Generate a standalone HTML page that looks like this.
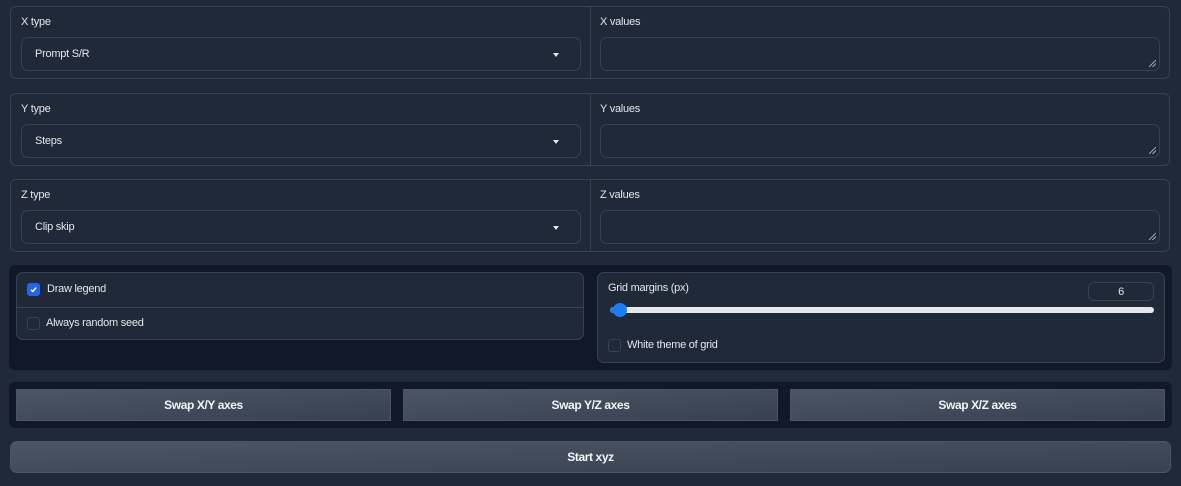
<!DOCTYPE html>
<html><head><meta charset="utf-8"><style>
*{box-sizing:border-box;margin:0;padding:0}
body{width:1181px;height:486px;background:#1f2937;font-family:"Liberation Sans",sans-serif;color:#e5e7eb;font-size:11px;letter-spacing:-0.25px;position:relative;overflow:hidden}
.abs{position:absolute}
.grp{position:absolute;left:10px;width:1160px;height:73px;border:1px solid #374151;border-radius:6px}
.grp .div{position:absolute;left:579px;top:0;bottom:0;width:1px;background:#374151}
.lbl{position:absolute;font-size:11px;color:#e5e7eb}
.sel{position:absolute;left:10px;top:30px;width:560px;height:34px;border:1px solid #374151;border-radius:7px;font-size:11px;padding:10px 0 0 13px}
.sel::after{content:"";position:absolute;right:21px;top:15px;border-left:3.5px solid transparent;border-right:3.5px solid transparent;border-top:4px solid #e5e7eb}
.ta{position:absolute;left:589px;top:30px;width:560px;height:34px;border:1px solid #374151;border-radius:7px}
.ta::after{content:"";position:absolute;right:3px;bottom:3px;width:7px;height:7px;background:linear-gradient(135deg,transparent 45%,#9ca3af 45%,#9ca3af 55%,transparent 55%,transparent 70%,#9ca3af 70%,#9ca3af 80%,transparent 80%)}
.dark{position:absolute;background:#111827;border-radius:6px}
.box{position:absolute;border:1px solid #374151;border-radius:7px;background:#1f2937}
.cb{position:absolute;width:13px;height:13px;border:1px solid #374151;border-radius:3px;background:#1f2937}
.btn{position:absolute;background:linear-gradient(to bottom right,#4b5563,#374151);border:1px solid #4b5563;color:#f3f4f6;font-weight:bold;font-size:12px;letter-spacing:-0.4px;text-align:center}
</style></head><body>

<div class="grp" style="top:6px"><div class="div"></div>
<div class="lbl" style="left:10px;top:9px">X type</div>
<div class="sel">Prompt S/R</div>
<div class="lbl" style="left:589px;top:9px">X values</div>
<div class="ta"></div></div>

<div class="grp" style="top:93px"><div class="div"></div>
<div class="lbl" style="left:10px;top:9px">Y type</div>
<div class="sel">Steps</div>
<div class="lbl" style="left:589px;top:9px">Y values</div>
<div class="ta"></div></div>

<div class="grp" style="top:179px"><div class="div"></div>
<div class="lbl" style="left:10px;top:9px">Z type</div>
<div class="sel">Clip skip</div>
<div class="lbl" style="left:589px;top:9px">Z values</div>
<div class="ta"></div></div>

<div class="dark" style="left:9px;top:265px;width:1163px;height:105px"></div>
<div class="box" style="left:16px;top:272px;width:568px;height:68px">
  <div class="abs" style="left:0;right:0;top:34px;height:1px;background:#374151"></div>
  <div class="cb" style="left:10px;top:10px;background:#2563eb;border-color:#2563eb"><svg width="11" height="11" viewBox="0 0 11 11" style="position:absolute;left:0;top:0"><path d="M3 5.7L4.8 7.5L8.2 3.5" stroke="#fff" stroke-width="1.4" fill="none"/></svg></div>
  <div class="lbl" style="left:30px;top:10px">Draw legend</div>
  <div class="cb" style="left:10px;top:44px"></div>
  <div class="lbl" style="left:29px;top:44px">Always random seed</div>
</div>
<div class="box" style="left:597px;top:272px;width:568px;height:91px">
  <div class="lbl" style="left:10px;top:9px">Grid margins (px)</div>
  <div class="abs" style="left:490px;top:9px;width:66px;height:19px;border:1px solid #374151;border-radius:6px;text-align:center;font-size:11px;padding-top:3px">6</div>
  <div class="abs" style="left:12px;top:34px;width:544px;height:6px;background:#e5e7eb;border-radius:3px"></div>
  <div class="abs" style="left:12px;top:34px;width:14px;height:6px;background:#1d7bf5;border-radius:3px"></div>
  <div class="abs" style="left:15px;top:30px;width:14px;height:14px;background:#1d7bf5;border-radius:50%"></div>
  <div class="cb" style="left:10px;top:66px"></div>
  <div class="lbl" style="left:29px;top:66px">White theme of grid</div>
</div>

<div class="dark" style="left:9px;top:382px;width:1163px;height:46px"></div>
<div class="btn" style="left:16px;top:389px;width:375px;height:32px;line-height:30px">Swap X/Y axes</div>
<div class="btn" style="left:403px;top:389px;width:375px;height:32px;line-height:30px">Swap Y/Z axes</div>
<div class="btn" style="left:790px;top:389px;width:375px;height:32px;line-height:30px">Swap X/Z axes</div>

<div class="btn" style="left:10px;top:441px;width:1161px;height:32px;line-height:30px;border-radius:7px;border-color:#4b5563">Start xyz</div>
</body></html>
